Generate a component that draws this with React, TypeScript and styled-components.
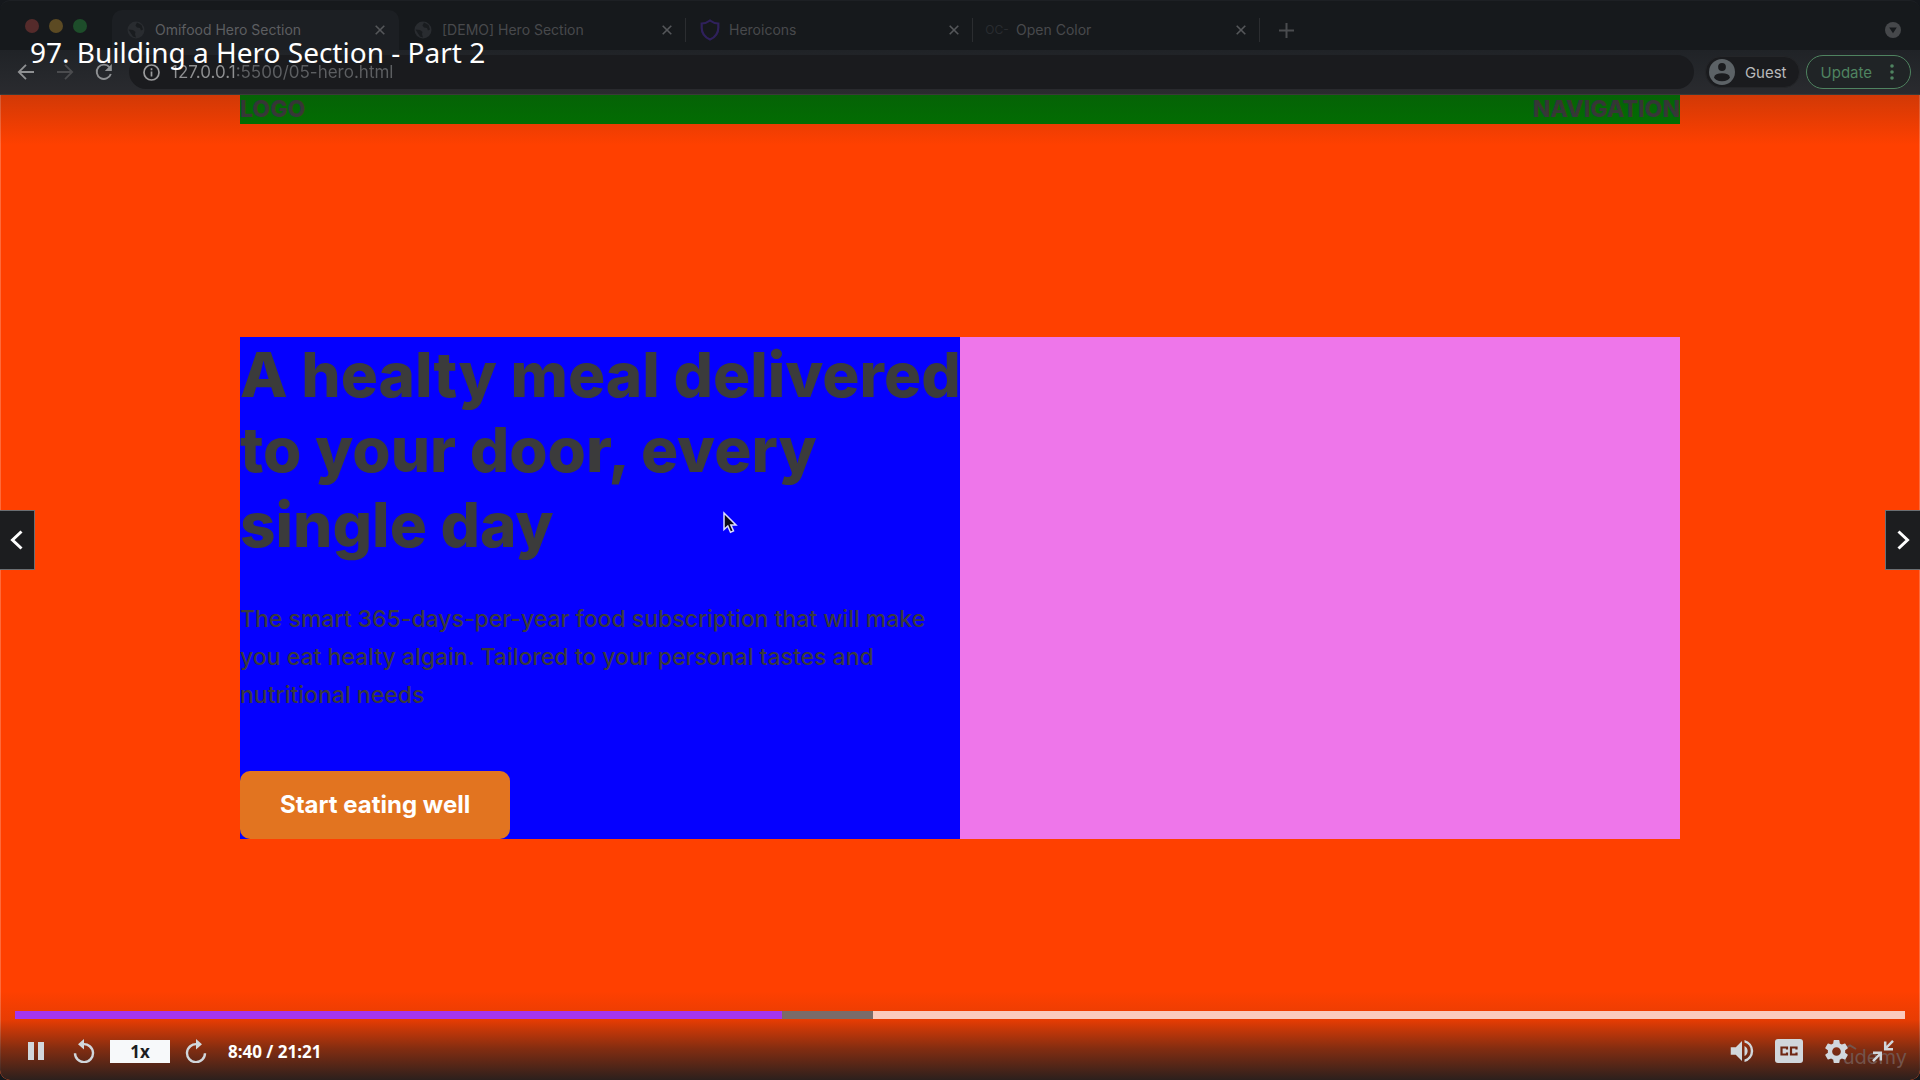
import React from "react";
import styled, { createGlobalStyle } from "styled-components";

const GlobalStyle = createGlobalStyle`
  *, *::before, *::after { box-sizing: border-box; }
  body { margin: 0; background: #15181c; }
  h1, p { margin: 0; }
  button, input { font: inherit; color: inherit; border: 0; padding: 0; margin: 0; background: none; outline: 0; }
  button { cursor: pointer; display: inline-flex; align-items: center; justify-content: center; }
  svg { display: block; flex: none; }
`;

const Player = styled.div`
  position: relative;
  display: flex;
  flex-direction: column;
  min-height: 100vh;
  overflow: hidden;
  font-family: Inter, "Liberation Sans", sans-serif;
`;

/* Recorded browser window */
const TabStrip = styled.div`
  display: flex;
  align-items: center;
  height: 50px;
  padding: 9px 19px 0 25px;
  background: #16191c;
  border-radius: 10px 10px 0 0;
  border-top: 1px solid #1d2024;
`;

const Lights = styled.div`
  display: flex;
  gap: 10px;
  width: 87px;
  padding-bottom: 8px;
`;

const Light = styled.span<{ $color: string }>`
  width: 14px;
  height: 14px;
  border-radius: 50%;
  background: ${(p) => p.$color};
`;

const Tab = styled.div<{ $active?: boolean; $divided?: boolean }>`
  position: relative;
  display: flex;
  align-items: center;
  gap: 10px;
  width: 287px;
  height: 100%;
  padding: 0 12px 0 15px;
  border-radius: 10px 10px 0 0;
  background: ${(p) => (p.$active ? "#1c1f23" : "transparent")};
  color: ${(p) => (p.$active ? "#5c5e61" : "#48494c")};
  font-size: 14px;
  line-height: 20px;
  &::after {
    content: "";
    position: absolute;
    right: 0;
    top: 8px;
    width: 1px;
    height: 24px;
    background: ${(p) => (p.$divided ? "#2b2d30" : "transparent")};
  }
`;

const TabTitle = styled.span`
  flex: 1;
  white-space: nowrap;
`;

const Favicon = styled.span`
  display: flex;
  justify-content: center;
  width: 18px;
  color: #292c30;
  font-size: 12px;
  white-space: nowrap;
`;

const TabButton = styled.button`
  width: 14px;
  height: 14px;
  color: #55575a;
`;

const NewTab = styled.button`
  width: 18px;
  height: 18px;
  margin-left: 17px;
  color: #4a4c4f;
`;

const TabSearch = styled.button`
  width: 16px;
  height: 16px;
  margin-left: auto;
`;

const Toolbar = styled.div`
  display: flex;
  align-items: center;
  height: 45px;
  padding: 0 9px 0 17px;
  background: linear-gradient(#202327, #2a2b2f);
  border-bottom: 1px solid #3a3a38;
`;

const NavButtons = styled.div`
  display: flex;
  gap: 21px;
  margin-right: 16px;
`;

const NavButton = styled.button<{ $color: string }>`
  width: 18px;
  height: 18px;
  color: ${(p) => p.$color};
`;

const AddressBar = styled.label`
  display: flex;
  align-items: center;
  gap: 11px;
  flex: 1;
  height: 34px;
  margin-right: 11px;
  padding: 0 14px;
  border-radius: 17px;
  background: #1a1b1e;
  color: #9a9b9c;
`;

const Address = styled.input`
  flex: 1;
  height: 24px;
  font-size: 17px;
  color: transparent;
  background: linear-gradient(90deg, #8f9092 66px, #5d5f62 66px);
  background-clip: text;
  -webkit-background-clip: text;
`;

const Guest = styled.button`
  gap: 10px;
  height: 32px;
  margin-right: 6px;
  padding: 0 12px 0 3px;
  border: 1px solid #242528;
  border-radius: 16px;
  background: #1a1b1e;
  color: #b9babb;
  font-size: 15px;
`;

const Update = styled.button`
  gap: 15px;
  height: 34px;
  padding: 0 13px 0 14px;
  border: 1px solid #4f8360;
  border-radius: 17px;
  background: #202426;
  color: #4f8360;
  font-size: 15px;
`;

/* Page shown in the recorded window */
const Page = styled.div`
  display: flex;
  flex: 1;
  flex-direction: column;
  padding: 0 12.5%;
  background: #ff4000;
  box-shadow: inset 1px 0 #ff6a3a, inset -1px 0 #ff6a3a;
  border-radius: 0 0 10px 10px;
  color: #3b3b3b;
`;

const PageHeader = styled.header`
  display: flex;
  justify-content: space-between;
  background: #007400;
  font-size: 23px;
  line-height: 29px;
  font-weight: 800;
`;

const HeroArea = styled.main`
  display: flex;
  flex: 1;
  align-items: center;
  padding-bottom: 28px;
`;

const Hero = styled.section`
  display: grid;
  grid-template-columns: 1fr 1fr;
  width: 100%;
`;

const HeroText = styled.div`
  min-width: 0;
  background: #0500ff;
  white-space: nowrap;
`;

const HeroPicture = styled.div`
  background: #ee76ea;
`;

const HeroTitle = styled.h1`
  margin-bottom: 38px;
  font-size: 62px;
  line-height: 75px;
  font-weight: 800;
`;

const HeroCopy = styled.p`
  margin-bottom: 57px;
  font-size: 23px;
  line-height: 38px;
  font-weight: 500;
`;

const HeroButton = styled.a`
  display: block;
  width: fit-content;
  padding: 19px 40px;
  border-radius: 10px;
  background: #e27420;
  color: #fff;
  font-size: 24px;
  line-height: 30px;
  font-weight: 700;
  text-decoration: none;
`;

/* Player overlays */
const TopShade = styled.div`
  position: absolute;
  inset: 95px 0 auto;
  height: 50px;
  background: linear-gradient(rgba(28, 29, 31, 0.2), rgba(28, 29, 31, 0));
  pointer-events: none;
`;

const LectureTitle = styled.div`
  position: absolute;
  top: 32px;
  left: 30px;
  color: #fff;
  font-family: "Noto Sans", "Open Sans", sans-serif;
  font-size: 28px;
  line-height: 40px;
  white-space: nowrap;
`;

const SideButton = styled.button<{ $side: "left" | "right" }>`
  position: absolute;
  top: calc(50% - 30px);
  ${(p) => p.$side}: 0;
  width: 35px;
  height: 60px;
  border: 1px solid #6a6f73;
  border-${(p) => p.$side}: 0;
  background: #1c1d1f;
  color: #fff;
`;

const Pointer = styled.svg`
  position: absolute;
  left: 37.6%;
  top: 47.3%;
`;

const ControlArea = styled.div`
  position: absolute;
  inset: auto 0 0;
  padding: 20px 15px 17px;
  border-radius: 0 0 10px 10px;
  background: linear-gradient(
    rgba(28, 29, 31, 0),
    rgba(28, 29, 31, 0.1) 32%,
    rgba(28, 29, 31, 0.55) 65%,
    rgba(28, 29, 31, 0.93)
  );
`;

const Scrubber = styled.input`
  display: block;
  width: 100%;
  height: 8px;
  appearance: none;
  background: linear-gradient(90deg, #a435f0 40.6%, #7b6b68 40.6%, #7b6b68 45.4%, #fbcabd 45.4%);
  &::-webkit-slider-thumb { appearance: none; width: 0; height: 0; }
`;

const Controls = styled.div`
  position: relative;
  display: flex;
  align-items: center;
  height: 24px;
  margin-top: 20px;
  color: #d1d7dc;
`;

const Control = styled.button`
  width: 28px;
  height: 24px;
`;

const LeftControls = styled.div`
  display: flex;
  align-items: center;
  gap: 20px;
  padding-left: 7px;
  font-family: "Noto Sans", "Open Sans", sans-serif;
  font-size: 17px;
  font-weight: 700;
`;

const RightControls = styled.div`
  display: flex;
  gap: 19px;
  margin-left: auto;
  padding-right: 8px;
`;

const Speed = styled.button`
  width: 60px;
  height: 23px;
  margin: 0 -8px;
  background: #f7f9fa;
  color: #1c1d1f;
`;

const Time = styled.span`
  margin-left: -2px;
  color: #fff;
  white-space: nowrap;
`;

const Watermark = styled.span`
  position: absolute;
  right: 13px;
  bottom: 10px;
  color: #73544c;
  font-size: 20px;
  line-height: 26px;
`;

const WatermarkHat = styled.svg`
  position: absolute;
  left: 0;
  top: 0;
`;

const Globe = () => (
  <svg width="18" height="18" viewBox="0 0 18 18">
    <circle cx="9" cy="9" r="8.5" fill="currentColor" />
    <path d="M1.500 8.500l4.500.5 2.500 2-.5 2 1 3.500-3-1-2-3z" fill="#191c1f" />
    <path d="M10 1.500l-1.500 3 1.500 2 3 .5 1 2.500 2-1-1.500-4.500z" fill="#191c1f" />
  </svg>
);

const Close = () => (
  <svg width="10" height="10" viewBox="0 0 10 10" stroke="currentColor" strokeWidth="1.6">
    <path d="M.7.7l8.600 8.600M9.300.7L.7 9.300" />
  </svg>
);

const Rewind = ({ flip }: { flip?: boolean }) => (
  <svg width="24" height="24" viewBox="0 0 24 24">
    <g transform={flip ? "matrix(-1 0 0 1 24 0)" : undefined}>
      <path d="M11 5.200a9 9 0 1 1-8 9" fill="none" stroke="currentColor" strokeWidth="2.400" />
      <path d="M12 0v10.500L6 5.200z" fill="currentColor" />
    </g>
  </svg>
);

const tabs = [
  { title: "Omifood Hero Section", icon: <Globe />, active: true },
  { title: "[DEMO] Hero Section", icon: <Globe />, divided: true },
  {
    title: "Heroicons",
    divided: true,
    icon: (
      <svg width="20" height="22" viewBox="0 0 20 22" fill="none" stroke="#2f215c" strokeWidth="2.200">
        <path d="M10 1.500c2.400 1.900 5 2.900 8.300 3v4.200c0 5.300-3.100 9.500-8.300 11.800C4.800 18.200 1.700 14 1.700 8.700V4.500c3.300-.1 5.900-1.100 8.300-3z" />
      </svg>
    ),
  },
  { title: "Open Color", icon: "OC-", divided: true },
];

export default function App() {
  return (
    <Player>
      <GlobalStyle />
      <TabStrip>
        <Lights>
          <Light $color="#552b2b" />
          <Light $color="#5c4a23" />
          <Light $color="#1d4d2a" />
        </Lights>
        {tabs.map((tab) => (
          <Tab key={tab.title} $active={tab.active} $divided={tab.divided}>
            <Favicon>{tab.icon}</Favicon>
            <TabTitle>{tab.title}</TabTitle>
            <TabButton aria-label={`Close ${tab.title}`}>
              <Close />
            </TabButton>
          </Tab>
        ))}
        <NewTab aria-label="New tab">
          <svg width="15" height="15" viewBox="0 0 15 15" stroke="currentColor" strokeWidth="2">
            <path d="M7.500 0v15M0 7.500h15" />
          </svg>
        </NewTab>
        <TabSearch aria-label="Search tabs">
          <svg width="16" height="16" viewBox="0 0 16 16">
            <circle cx="8" cy="8" r="8" fill="#46484b" />
            <path d="M4.200 5.500h7.600L8 11.200z" fill="#16191c" />
          </svg>
        </TabSearch>
      </TabStrip>

      <Toolbar>
        <NavButtons>
          <NavButton $color="#8f9193" aria-label="Back">
            <svg width="18" height="18" viewBox="0 0 18 18" fill="none" stroke="currentColor" strokeWidth="1.800">
              <path d="M17 9H2M9 1.800L1.800 9 9 16.200" />
            </svg>
          </NavButton>
          <NavButton $color="#4a4b4e" aria-label="Forward">
            <svg width="18" height="18" viewBox="0 0 18 18" fill="none" stroke="currentColor" strokeWidth="1.800">
              <path d="M1 9h15M9 1.800L16.200 9 9 16.200" />
            </svg>
          </NavButton>
          <NavButton $color="#8f9193" aria-label="Reload">
            <svg width="18" height="18" viewBox="0 0 18 18" fill="none" stroke="currentColor" strokeWidth="1.900">
              <path d="M15.800 11A7.200 7.200 0 1 1 14.500 4.200" />
              <path d="M16.800 1v7h-7z" fill="currentColor" stroke="none" />
            </svg>
          </NavButton>
        </NavButtons>
        <AddressBar>
          <svg width="17" height="17" viewBox="0 0 17 17" fill="none" stroke="currentColor" strokeWidth="1.700">
            <circle cx="8.500" cy="8.500" r="7.500" />
            <path d="M8.500 7.500v5M8.500 4.300v1.900" />
          </svg>
          <Address aria-label="Address" defaultValue="127.0.0.1:5500/05-hero.html" />
        </AddressBar>
        <Guest>
          <svg width="26" height="26" viewBox="0 0 26 26">
            <circle cx="13" cy="13" r="13" fill="#5c6266" />
            <circle cx="13" cy="8" r="3.900" fill="#1a1b1e" />
            <ellipse cx="13" cy="18.200" rx="7.800" ry="4" fill="#1a1b1e" />
          </svg>
          Guest
        </Guest>
        <Update>
          Update
          <svg width="10" height="16" viewBox="0 0 10 16" fill="currentColor">
            <circle cx="5" cy="2" r="1.800" />
            <circle cx="5" cy="8" r="1.800" />
            <circle cx="5" cy="14" r="1.800" />
          </svg>
        </Update>
      </Toolbar>

      <Page>
        <PageHeader>
          <span>LOGO</span>
          <span>NAVIGATION</span>
        </PageHeader>
        <HeroArea>
          <Hero>
            <HeroText>
              <HeroTitle>
                A healty meal delivered
                <br />
                to your door, every
                <br />
                single day
              </HeroTitle>
              <HeroCopy>
                The smart 365-days-per-year food subscription that will make
                <br />
                you eat healty algain. Tailored to your personal tastes and
                <br />
                nutritional needs
              </HeroCopy>
              <HeroButton href="#">Start eating well</HeroButton>
            </HeroText>
            <HeroPicture />
          </Hero>
        </HeroArea>
      </Page>

      <TopShade />
      <LectureTitle>97. Building a Hero Section - Part 2</LectureTitle>

      <Pointer width="16" height="24" viewBox="0 0 16 24">
        <path d="M2 2v16.500l3.800-3.500 2.700 6.200 3-1.300-2.700-6H14z" fill="#0b0b16" stroke="#dcdcff" strokeWidth="1.500" />
      </Pointer>

      <SideButton $side="left" aria-label="Previous lecture">
        <svg width="14" height="20" viewBox="0 0 14 20" fill="none" stroke="currentColor" strokeWidth="3">
          <path d="M11.500 1.500L2.500 10l9 8.500" />
        </svg>
      </SideButton>
      <SideButton $side="right" aria-label="Next lecture">
        <svg width="14" height="20" viewBox="0 0 14 20" fill="none" stroke="currentColor" strokeWidth="3">
          <path d="M2.500 1.500l9 8.500-9 8.500" />
        </svg>
      </SideButton>

      <ControlArea>
        <Watermark>
          <WatermarkHat width="14" height="6" viewBox="0 0 14 6" fill="none" stroke="currentColor" strokeWidth="2">
            <path d="M1 5l6-3.500L13 5" />
          </WatermarkHat>
          udemy
        </Watermark>
        <Scrubber type="range" aria-label="Progress" min={0} max={1281} defaultValue={520} />
        <Controls>
          <LeftControls>
            <Control aria-label="Pause">
              <svg width="16" height="18" viewBox="0 0 16 18" fill="currentColor">
                <path d="M0 0h6v18H0zM10 0h6v18h-6z" />
              </svg>
            </Control>
            <Control aria-label="Rewind 5 seconds">
              <Rewind />
            </Control>
            <Speed>1x</Speed>
            <Control aria-label="Forward 5 seconds">
              <Rewind flip />
            </Control>
            <Time>8:40 / 21:21</Time>
          </LeftControls>
          <RightControls>
            <Control aria-label="Volume">
              <svg width="30" height="30" viewBox="0 0 24 24" fill="currentColor">
                <path d="M3 9v6h4l5 5V4L7 9H3zm13.500 3A4.500 4.500 0 0 0 14 7.970v8.050A4.470 4.470 0 0 0 16.500 12zM14 3.230v2.060a7 7 0 0 1 0 13.420v2.060a9 9 0 0 0 0-17.540z" />
              </svg>
            </Control>
            <Control aria-label="Captions">
              <svg width="28" height="24" viewBox="0 0 28 24">
                <rect width="28" height="24" rx="3" fill="currentColor" />
                <path d="M12 10.500V8.500H6.500v7H12v-2M21.500 10.500V8.500H16v7h5.500v-2" fill="none" stroke="#6e2713" strokeWidth="2.200" />
              </svg>
            </Control>
            <Control aria-label="Settings">
              <svg width="29" height="29" viewBox="0 0 24 24" fill="currentColor">
                <path d="M19.140 12.940c.04-.3.060-.61.060-.94s-.02-.64-.07-.94l2.030-1.580a.49.49 0 0 0 .12-.61l-1.920-3.320a.49.49 0 0 0-.59-.22l-2.390.96a7 7 0 0 0-1.620-.94l-.36-2.540A.48.48 0 0 0 13.920 2.400h-3.840a.48.48 0 0 0-.47.410l-.36 2.540a7.200 7.200 0 0 0-1.620.94l-2.390-.96a.48.48 0 0 0-.59.22L2.740 8.870a.47.47 0 0 0 .12.610l2.030 1.580a7 7 0 0 0 0 1.880l-2.030 1.580a.49.49 0 0 0-.12.610l1.920 3.320c.12.220.37.290.59.220l2.390-.96c.5.380 1.030.7 1.620.94l.36 2.540c.05.240.240.410.480.410h3.840c.24 0 .44-.17.470-.41l.36-2.540a7.200 7.200 0 0 0 1.620-.94l2.390.96c.22.080.47 0 .59-.22l1.920-3.320a.47.47 0 0 0-.12-.61zM12 15.600a3.600 3.600 0 1 1 0-7.200 3.600 3.600 0 0 1 0 7.200z" />
              </svg>
            </Control>
            <Control aria-label="Exit full screen">
              <svg width="22" height="24" viewBox="0 0 22 24" fill="none" stroke="currentColor" strokeWidth="2.500">
                <path d="M21 1.800L13.500 9.500M13.200 2.500v7.800h7.800M1 22.200l7.500-7.700M1 13.700h7.800v7.800" />
              </svg>
            </Control>
          </RightControls>
        </Controls>
      </ControlArea>
    </Player>
  );
}
